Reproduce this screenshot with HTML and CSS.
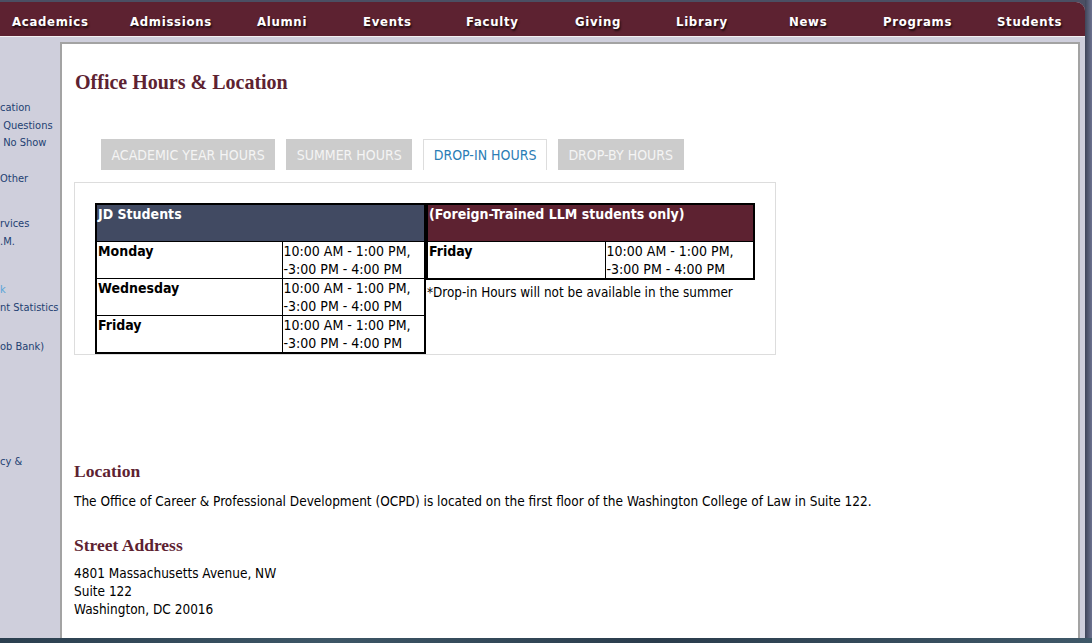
FILE: index.html
```html
<!DOCTYPE html>
<html lang="en">
<head>
<meta charset="utf-8">
<title>Office Hours &amp; Location</title>
<link rel="stylesheet" href="styles.css">
</head>
<body>
<div class="screen">
  <div class="window">
    <nav class="topnav">
      <a href="#">Academics</a>
      <a href="#">Admissions</a>
      <a href="#">Alumni</a>
      <a href="#">Events</a>
      <a href="#">Faculty</a>
      <a href="#">Giving</a>
      <a href="#">Library</a>
      <a href="#">News</a>
      <a href="#">Programs</a>
      <a href="#">Students</a>
    </nav>
    <div class="page">
      <aside class="sidebar">
        <ul class="sidenav">
          <li class="first"><a href="#">cation</a></li>
          <li><a href="#">&nbsp;Questions</a></li>
          <li><a href="#">&nbsp;No Show</a></li>
          <li class="gap-a"><a href="#">Other</a></li>
          <li class="gap-b"><a href="#">rvices</a></li>
          <li><a href="#">.M.</a></li>
          <li class="gap-c"><a href="#" class="visited">k</a></li>
          <li><a href="#">nt Statistics</a></li>
          <li class="gap-d"><a href="#">ob Bank)</a></li>
          <li class="gap-e"><a href="#">cy &amp;</a></li>
        </ul>
      </aside>
      <main class="content">
        <h1 class="title">Office Hours &amp; Location</h1>
        <ul class="tabs">
          <li class="tab">ACADEMIC YEAR HOURS</li>
          <li class="tab">SUMMER HOURS</li>
          <li class="tab active">DROP-IN HOURS</li>
          <li class="tab">DROP-BY HOURS</li>
        </ul>
        <div class="panel">
          <table class="hours jd">
            <tr><th colspan="2" class="head slate">JD Students</th></tr>
            <tr><td class="day">Monday</td><td class="time">10:00 AM - 1:00 PM,<br>-3:00 PM - 4:00 PM</td></tr>
            <tr><td class="day">Wednesday</td><td class="time">10:00 AM - 1:00 PM,<br>-3:00 PM - 4:00 PM</td></tr>
            <tr><td class="day">Friday</td><td class="time">10:00 AM - 1:00 PM,<br>-3:00 PM - 4:00 PM</td></tr>
          </table>
          <div class="llm">
            <table class="hours llm-table">
              <tr><th colspan="2" class="head maroon">(Foreign-Trained LLM students only)</th></tr>
              <tr><td class="day day-llm">Friday</td><td class="time">10:00 AM - 1:00 PM,<br>-3:00 PM - 4:00 PM</td></tr>
            </table>
            <p class="note">*Drop-in Hours will not be available in the summer</p>
          </div>
        </div>
        <h2 class="section first-section">Location</h2>
        <p class="text">The Office of Career &amp; Professional Development (OCPD) is located on the first floor of the Washington College of Law in Suite 122.</p>
        <h2 class="section">Street Address</h2>
        <p class="text address">4801 Massachusetts Avenue, NW<br>Suite 122<br>Washington, DC 20016</p>
      </main>
    </div>
  </div>
  <div class="scrollbar"></div>
</div>
<div class="desktop"></div>
</body>
</html>
```

FILE: styles.css
```css
* { box-sizing: border-box; }

html, body {
  margin: 0;
  padding: 0;
  height: 643px;
  overflow: hidden;
}

body {
  background: #4b4f63;
  font-family: "DejaVu Sans", "Liberation Sans", sans-serif;
  font-stretch: condensed;
  color: #000;
}

.screen {
  display: flex;
  height: 638px;
}

.window {
  width: 1085px;
  margin-top: 2px;
  background: #cfcfdc;
  border-top-right-radius: 9px;
  overflow: hidden;
  display: flex;
  flex-direction: column;
}

.scrollbar {
  flex: 1;
  background: linear-gradient(90deg, #3f4559, #5b617a 60%, #6c7290);
}

.desktop {
  height: 5px;
  background: linear-gradient(90deg, #2b3f4f, #3d5666 30%, #2a3c4c 60%, #3f5868);
}

/* top navigation */
.topnav {
  height: 35px;
  background: #5d2231;
  border-bottom: 1px solid #f4f0f2;
  display: grid;
  grid-template-columns: 118px 127px 106px 103px 109px 101px 113px 94px 114px auto;
  align-items: center;
  padding: 4px 0 0 12px;
}

.topnav a {
  color: #fff;
  text-decoration: none;
  font-weight: bold;
  font-size: 13px;
  letter-spacing: 0.7px;
  text-shadow: 1px 2px 2px #1b0a0e;
  white-space: nowrap;
}

/* page body */
.page {
  flex: 1;
  display: flex;
  padding-top: 5px;
  min-height: 0;
}

.sidebar {
  width: 60px;
  overflow: hidden;
  flex: none;
}

.sidenav {
  list-style: none;
  margin: 0;
  padding: 0;
  font-size: 11px;
  line-height: 17.5px;
  white-space: nowrap;
}

.sidenav a {
  color: #233f72;
  text-decoration: none;
}

.sidenav a.visited { color: #5aa5d8; }

.sidenav .first { margin-top: 57px; }
.sidenav .gap-a { margin-top: 18px; }
.sidenav .gap-b { margin-top: 28px; }
.sidenav .gap-c { margin-top: 31px; }
.sidenav .gap-d { margin-top: 22px; }
.sidenav .gap-e { margin-top: 97px; }

.content {
  width: 1020px;
  flex: none;
  background: #fff;
  border: 2px solid #a3a3a3;
  border-bottom: 0;
  padding: 0 12px;
  overflow: hidden;
}

.title {
  margin: 26px 0 0 1px;
  font-family: "Liberation Serif", serif;
  font-stretch: normal;
  font-size: 20px;
  line-height: 24px;
  font-weight: bold;
  color: #5d2231;
}

/* tabs */
.tabs {
  list-style: none;
  display: flex;
  gap: 11px;
  margin: 45px 0 0 27px;
  padding: 0;
}

.tab {
  background: #cccccc;
  color: #f4f4f4;
  border: 1px solid #cccccc;
  border-bottom: 0;
  font-size: 14px;
  line-height: 17px;
  padding: 7px 9.5px;
  height: 31px;
}

.tab.active {
  background: #fff;
  border-color: #dddddd;
  color: #2b7db5;
}

.panel {
  margin-top: 12px;
  width: 702px;
  border: 1px solid #dddddd;
  padding: 20px 20px 0;
  display: flex;
  align-items: flex-start;
}

.hours {
  border-collapse: collapse;
  border: 2px solid #000;
  font-size: 14px;
  line-height: 18px;
}

.hours th, .hours td {
  border: 1px solid #000;
  padding: 0 1px;
  vertical-align: top;
  text-align: left;
}

.jd { width: 331px; }

.llm { width: 329px; }
.llm-table { width: 329px; }

.head {
  color: #fff;
  font-weight: bold;
  height: 37px;
  border-width: 2px;
}

.slate { background: #414a62; }
.maroon { background: #5d2231; }

.day {
  font-weight: bold;
  width: 186px;
}

.day-llm { width: 178px; }

.time { white-space: nowrap; }

.note {
  margin: 4px 0 0;
  padding-left: 1px;
  font-size: 13.4px;
  line-height: 18px;
}

.section {
  margin: 25px 0 0;
  font-family: "Liberation Serif", serif;
  font-stretch: normal;
  font-size: 17.5px;
  line-height: 20px;
  font-weight: bold;
  color: #5d2231;
}

.section.first-section { margin-top: 106px; }

.text {
  margin: 11px 0 0;
  font-size: 13.5px;
  line-height: 18px;
}

.text.address { margin-top: 9px; }
```
